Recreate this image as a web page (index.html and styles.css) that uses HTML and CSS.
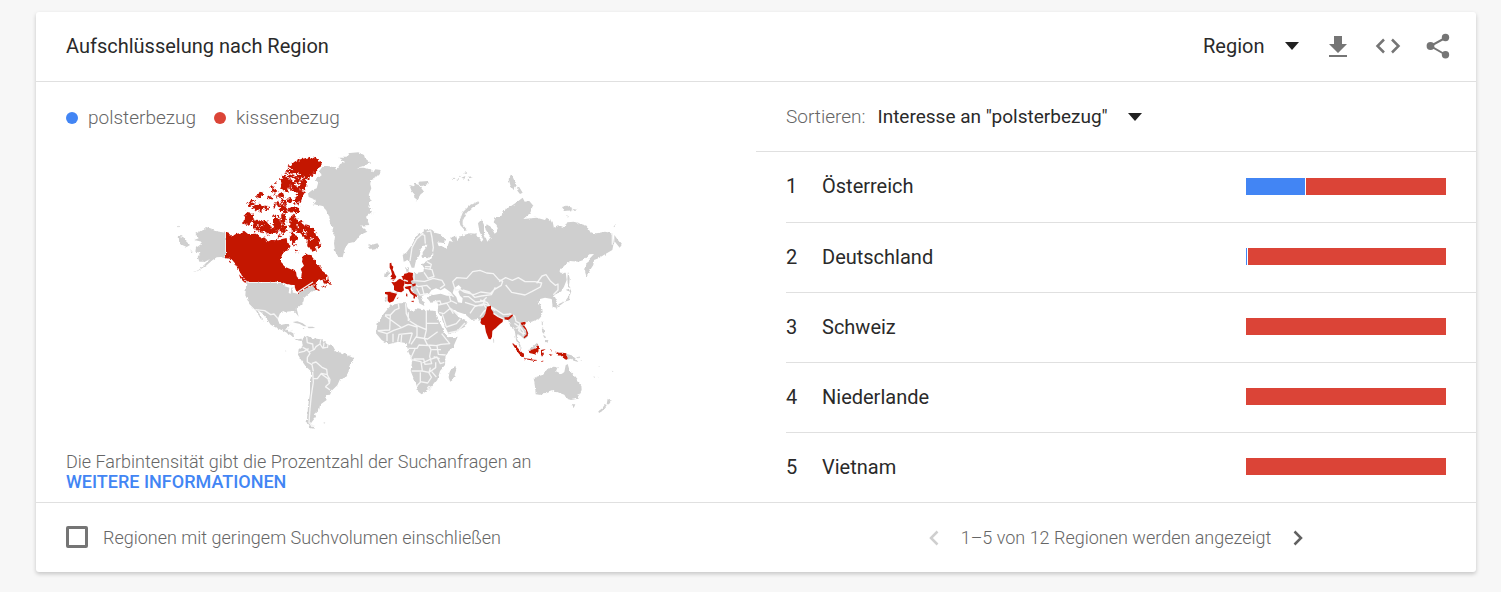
FILE: index.html
```html
<!DOCTYPE html>
<html lang="de">
  <head>
    <meta charset="utf-8">
    <title>Aufschlüsselung nach Region</title>
    <link rel="stylesheet" href="styles.css">
  </head>
  <body>
    <main class="card">
      <header class="card-header">
        <h1>Aufschlüsselung nach Region</h1>
        <div class="actions">
          <div class="dropdown">
            <select aria-label="Auflösung"><option>Region</option></select>
            <svg class="arrow" viewBox="0 0 14 8"><path d="M0 0h14L7 8z"/></svg>
          </div>
          <button class="icon-button" aria-label="Herunterladen">
            <svg viewBox="0 0 30 30"><path d="M11 5h8v8h5l-9 9-9-9h5zM6 24h18v2H6z"/></svg>
          </button>
          <button class="icon-button" aria-label="Einbetten">
            <svg viewBox="0 0 30 30"><path class="line" d="M11 8.500l-6.500 6.500 6.500 6.500M19 8.500l6.500 6.500-6.500 6.500"/></svg>
          </button>
          <button class="icon-button" aria-label="Teilen">
            <svg viewBox="0 0 30 30"><path class="line thin" d="M23 6.500L7.500 15 23 24"/><circle cx="22.500" cy="6.500" r="3.700"/><circle cx="7.500" cy="15" r="3.900"/><circle cx="22.500" cy="23.700" r="3.700"/></svg>
          </button>
        </div>
      </header>

      <div class="content">
        <section class="map-side">
          <div class="legend">
            <span class="term"><i class="dot blue"></i>polsterbezug</span>
            <span class="term"><i class="dot red"></i>kissenbezug</span>
          </div>

          <svg class="map" viewBox="-24 0 1404 870" role="img" aria-label="Weltkarte">
            <defs>
              <filter id="coast" x="-10%" y="-10%" width="120%" height="120%">
                <feTurbulence type="fractalNoise" baseFrequency="0.12" numOctaves="3" seed="4" result="noise"/>
                <feDisplacementMap in="SourceGraphic" in2="noise" scale="20" xChannelSelector="R" yChannelSelector="G"/>
              </filter>
              <filter id="shore" x="-5%" y="-5%" width="110%" height="110%">
                <feTurbulence type="fractalNoise" baseFrequency="0.1" numOctaves="2" seed="9" result="noise"/>
                <feDisplacementMap in="SourceGraphic" in2="noise" scale="9" xChannelSelector="R" yChannelSelector="G"/>
              </filter>
            </defs>

            <!-- Alaska -->
            <g class="land" filter="url(#shore)">
              <path d="M166 263L140 259 125 251 108 246 100 253 85 262 76 266 86 280 73 285 95 290 93 298 78 308 76 320 92 323 83 335 88 350 105 350 120 342 102 360 80 380 108 362 128 345 140 337 152 336 166 340z"/>
              <path d="M26 272l14 4 5 10 15 14-10 6-8-4-14-6zM24 242l8 3-6 2zM62 316l6 3-5 2zM80 378l-12 3 8-1z"/>
            </g>

            <!-- Canada, mainland -->
            <g class="hit" filter="url(#shore)">
              <path d="M168 263L178 267 186 275 196 268 210 264 222 257 234 267 258 266 270 277 286 278 290 292 303 285 325 286 336 282 350 279 352 295 362 303 355 316 340 320 333 338 333 354 346 366 366 374 378 380 380 394 388 403 394 397 396 382 392 372 402 362 396 350 399 334 409 326 422 331 434 345 440 358 450 362 454 376 470 387 468 402 445 407 426 422 405 432 385 445 375 432 374 420 355 419 335 411 235 411 222 402 209 380 195 355 184 342 168 340z"/>
              <path d="M430 420l12-4-4 10 6 10-12-3zM458 405l14-3 2-10 4 18 8 10-13-3-12-2zM452 424l10-2 10-3-8 8zM442 433l10 3-8 1zM207 388l8 8 18 18-12-4-10-10zM172 343l14 10-6 0z"/>
            </g>
            <!-- Canada, arctic islands -->
            <g class="hit islands" filter="url(#coast)">
              <path d="M347 80L358 62 375 50 398 42 420 37 445 42 455 57 442 75 425 92 412 103 408 122 400 150 390 174 377 165 383 145 368 135 362 118 352 140 336 136 331 118 337 92 350 96 368 108 385 95 360 100 350 90z"/>
              <path d="M226 204l24 3-4 18-8 15-18-4zM250 222l16 8 22-4 12 14 8 28-14 0-14-8-20-4-14-13z"/>
              <path d="M360 212l14-4 8 18 18 10 18 6 14 12 10 22 8 16-2 16-12-4 4 16-14-4-14-12 2-16-14-14-12-14-14 0-14-10-2-16z"/>
              <path d="M310 212l14 2 8 14 2 22-12 12-14-8 4-18zM334 208l12 0 2 26-14 2zM338 240l10 0 2 22-12 8-6-14zM300 245l10 4 8 14-16-2zM322 267l18 8-6 4-12-4zM363 260l16 12 4 12-14 10-10-12z"/>
              <path d="M357 188l30 0 0 13-28 1zM330 183l12-2 14 16-10 6-16-6zM313 173l14-2 4 12-12 4zM335 164l12 2 4 14-12-2zM372 162l16 2-6 14-12-3zM353 158l12 4-2 12-10-4z"/>
              <path d="M233 174l12-10 14 2-12 8-6 12zM252 176l18 2 16 6-12 16-16-4-10-8zM264 148l12-8 4 10-18 10zM285 182l10 3-2 10-8-3zM293 155l12-2 0 10-12-2zM304 135l10-6 8 10-8 8zM300 126l10-3-4 8zM328 144l12 2 2 12-14-2zM316 152l8 0-2 8zM315 112l5 2-4 4zM358 124l12 8-8 6z"/>
              <path d="M375 312l10 6-6 5zM368 290l10 14-12-6z"/>
              <path class="fjord" d="M348 84l24 6 18-4M352 64l16 10M404 92l-22 34M392 134l14 2M372 110l10 12M262 244l18-2M400 256l12 18M384 240l2 12M416 284l14-4"/>
            </g>

            <!-- Greenland and Iceland -->
            <g class="land" transform="translate(360 0)" filter="url(#shore)">
              <path d="M54 145L66 136 80 130 85 112 74 104 95 88 86 80 97 66 112 63 132 66 140 74 150 58 164 50 148 38 170 38 180 24 205 22 222 30 225 40 240 52 225 62 200 68 222 68 240 74 250 82 256 73 272 75 268 90 250 100 240 115 244 130 236 150 242 165 235 185 246 200 228 215 238 240 210 242 232 260 210 270 195 290 175 295 165 310 158 337 145 336 135 318 132 295 135 275 127 262 130 245 120 237 118 215 108 195 95 182 68 178 78 165 56 156z"/>
              <path d="M234 296l10 4 18-5 6 8-12 10-14 2-8-8 6-3zM245 205l8-2-6 8zM236 188l12 2-10 4z"/>
            </g>

            <!-- Eurasia -->
            <g transform="translate(600 60)">
              <path class="land" filter="url(#shore)" d="M186 194L195 203 212 208 226 222 222 235 202 232 206 243 222 245 230 252 238 228 250 230 240 218 258 212 262 225 272 213 300 205 318 206 335 228 340 225 328 198 324 175 335 163 342 180 342 205 352 230 362 217 346 192 350 178 362 185 374 206 385 198 380 180 371 172 377 156 395 152 398 138 420 125 440 112 458 98 464 110 478 108 490 122 480 145 460 162 500 158 525 165 530 158 548 170 552 190 565 183 582 190 592 172 612 170 650 182 662 203 680 205 705 200 727 205 731 235 727 255 705 268 687 279 672 285 670 300 656 322 650 337 645 320 648 300 660 280 672 267 658 268 640 285 625 290 600 288 585 300 568 318 575 328 587 322 590 345 582 365 573 380 562 382 552 393 561 412 560 428 548 425 545 402 525 398 510 402 506 410 515 428 518 440 510 460 485 470 468 472 460 485 473 500 473 515 463 523 452 512 442 508 440 520 450 538 455 550 448 545 438 525 435 500 430 490 420 480 413 463 405 466 393 465 378 490 365 500 358 522 350 500 345 475 333 472 325 462 305 465 285 448 262 440 248 430 252 440 265 455 280 465 293 470 285 485 255 500 236 508 225 485 213 455 203 442 205 420 202 408 180 410 172 400 182 390 172 384 162 390 155 394 160 408 163 423 148 415 142 395 128 378 118 350 132 325 160 320 163 310 155 298 170 288 182 284 190 270 188 250 178 230z"/>
              <path class="land" filter="url(#shore)" d="M186 194L172 192 160 200 147 205 135 222 124 242 110 262 98 270 101 290 116 285 125 308 133 308 137 290 150 268 152 252 166 236 172 242 158 262 158 278 175 280 186 272 192 250zM108 312l8-8 0 18-6 2zM44 325l10-6 4 8-8 10-8-2zM46 392l5 0-2 18-5 0z"/>
              <path class="sea" d="M176 388L184 376 198 370 212 376 224 369 242 382 250 393 230 392 212 386 190 390zM252 370L266 360 274 368 265 380 270 392 278 400 276 414 264 412 259 396 248 384z"/>
              <!-- arctic islands -->
              <g class="land" filter="url(#shore)">
                <path d="M118 60l14 4 4-8 10 4 10 12 6 8-10 8-14 22-3-20-10-12zM146 50l28-2 2 8-22 8-8-6z"/>
                <path d="M325 109l3 6-20 12-18 16-12 24 0 12 14 16-6 2-15-16-3-12 11-28 18-18z"/>
                <path d="M416 42l8-16 6 14 10 24-8 12-10-12zM442 65l6 2 10 16-8 4-8-10zM576 126l14-4 16 6-2 8-20 2zM606 131l18 4-10 3zM588 150l8 4-2 4zM728 183l10-2-6 6zM733 210l22 30-6 8-16-20z"/>
                <path d="M244 40l10-2-3 4zM258 45l12-3-5 6zM274 38l12-5-2 8zM282 24l10-3-4 6zM292 36l16-2-8 6zM266 34l8-3-3 5zM293 44l7 2-6 3z"/>
                <path d="M594 320l5 20-2 22 5 8-8-4-2-24zM600 372l4 6-6 18 0 10-14 4-12 10-14 6 10-10 18-8 10-14zM588 375l14-4-6 8zM557 426l6 2-2 6z"/>
              </g>
              <!-- borders -->
              <path class="border" d="M120 288l6-40 14-26 20-18M150 205l14 6 2 25M170 200l12-2 4 20 4 30-2 12M248 350l12-12 30 2 18-20 22-4 20 8 20 2 16 18 12 5-4 12-20 12-12 12-30-4-20 8-30-8-12-8-14 2zM387 350l20-12 20 8 18-8 20 12 30 0 20 4-4 12-26 14-20 10-40-8-18-22M500 355l16-22 12-4 14 20 14 12 8-4 0 18-14 14M132 325l0 22 30 2M162 322l12 18 18-6-6-20-22-4M162 350l28-10 26 6 8 14-14 10M130 355l14 10 26-4 12 12M140 370l10 20 22-4M156 364l6 24M235 383l16 12M242 408l-4-16M278 375l20 6 16 16 20-4 30-4 12-22M280 395l16 0 20 16 22-2 12-12M285 412l30 10 22 0 8-18M205 420l26-6 14-6 16 8M230 414l20 32M300 445l14-20 26-8 10 14-20 24M340 415l30 14 30 20 20-2M330 405l22 8 10 16 14 8M334 450l10-14M418 445l16 8 4 16 12 6 16-4M450 475l-4 22 12 8 8 0M170 290l14 8-4 14M165 305l18 0M110 322l10 0M190 410l20-2 4 12M727 205l0 34"/>
              <!-- western Europe -->
              <g class="hit">
                <path d="M59 295l5-2 1 8 5 4-2 9 4 6 2 7 5 8-3 6-10 2-5 0 6-6-6-2 5-7-3-12-4-8zM66 345l10-2-6 4z"/>
                <path d="M94 334l7-2 2-6 8-1 5-3 13 2-1 12 2 8-8 4 4 9-12 1-10-2 0-8-6-5 0-4z"/>
                <path d="M64 351l10 1 6-3 4-5 6-3 14 8-1 9-3 8 2 10-8 6-12-2-10-5 0-12zM104 363l6 2-1 6z"/>
                <path d="M45 381l17-1 20 3-2 6-4 8-6 12-12 4-5-6 0-18-8-2zM80 400l6-3-3 4z"/>
                <path d="M104 367l6-5 10 0 4 2-3 8 5 9 14 9 1 7-5-3-2 7-4-1 1-8-10-7-6-12-8-2zM122 408l10-1-2 5zM109 385l3 2 0 8-4-2zM126 358l10-3 2 6-10 4z"/>
              </g>
              <path class="sea-line" d="M102 345l12 4M102 364l20-4M62 380l22 5"/>
            </g>

            <!-- Africa -->
            <g transform="translate(585 240)">
              <path class="land" filter="url(#shore)" d="M78 240L105 235 125 235 128 250 145 260 158 250 185 256 212 258 216 275 228 300 238 322 250 337 278 335 265 365 242 388 240 420 225 438 217 465 195 492 170 508 160 500 150 470 137 438 142 405 130 380 125 355 100 350 70 358 50 345 33 325 38 295 55 268zM271 422l3 12-10 30-8 6-5-12 4-20z"/>
              <path class="border" d="M60 270l16 0 14-15 12-5-2-14M76 270l-2 45-36 2M60 272l50 36 20-10 26 8 0 26-18 26M122 236l2 30 10 20M130 262l0 26M134 288l22 14 28 12M184 255l0 40 36 0M184 295l0 20-6 26 10 20M40 318l26 8 20-10 24-8M66 328l0 20M84 352l0-26M98 350l4-22 40-4M110 330l-2 24M142 324l-10 32M152 336l36 6 30-22M188 360l26 2 14-4 26-2-24-30M216 362l4 26 22 2M130 370l26 0 6-10 30 2 6 12-4 20 6 22-20 2-4-16-30 0M150 372l-14 30M138 404l30 6 4 28-32 0M172 414l22-10 22-8 10 20 12-4M172 438l20 4 20-14 0-16M166 442l0 30-10 10M166 470l22 4 12-18M200 440l14 16M196 428l-4 16 8 14M192 484l6 4-4 6-6-6zM200 374l28 0M206 395l18 6M222 262l14 4 20-16 24 20M232 268l12 38 30-10 12-14M250 324l28-6 22-24"/>
            </g>

            <!-- North and South America -->
            <g transform="translate(180 375)">
              <path class="land" filter="url(#shore)" d="M49 38L155 38 170 46 190 50 188 68 205 69 225 58 242 48 254 54 255 60 238 70 222 84 220 98 200 116 206 140 197 128 185 124 165 125 150 130 143 148 150 166 162 163 178 162 168 176 178 184 190 190 193 206 205 208 216 206 214 213 198 210 182 195 160 182 140 174 122 164 108 143 95 128 82 120 90 134 100 152 92 146 78 122 58 102 46 76z"/>
              <path class="land" filter="url(#shore)" d="M216 213L220 203 232 198 246 204 270 208 284 214 290 222 310 230 318 245 335 248 350 254 370 264 369 276 358 288 355 310 348 322 330 328 322 346 305 362 300 374 285 376 290 390 270 404 268 418 255 430 258 440 246 455 240 464 256 477 240 474 230 458 234 410 240 370 240 330 246 306 228 290 212 268 204 254 206 238 218 228z"/>
              <path class="land" d="M188 156l14-2 16 6 12 9-8 0-14-8-12-2zM232 170l16 0 8 4-20 1zM218 174l6 1-4 2zM280 458l6-1-3 4zM166 241l3 2-2 2z"/>
              <path class="sea" d="M162 48l14-5 16 6-8 4-2 18-6-2 2-16zM187 53l10 3-2 12-6-2zM193 69l16-5-6 7z"/>
              <path class="border" d="M76 119l28 3 18 12 10-2 12 14M203 66l46-30M166 180l12-6M178 186l10-6M218 232l12 6 10 12-8 12M230 202l2 16 16 4 2 18-14 6M252 240l6-10 12-8 2-12M270 222l8 12 12-2M282 218l-2 16M294 222l-2 12M206 248l16-4 14-8M232 262l0 14 14 8 4 20M246 280l12-4 18 16 14 6 2 16-18-4-12 16-14 0M274 312l20 14 4 14-12 10M292 315l8 14-2 12M248 306l2 30-6 40-4 40-3 42 8 6M286 350l14 10M240 463l14 6"/>
            </g>

            <!-- South Asia and Oceania -->
            <g transform="translate(885 375)">
              <path class="hit" d="M66 110l12-3 0 10 6 8 2 8 12 5 16 10-1 8-8 6-12 11-11 9-1 18-4 8-6-1-8-20-4-22-8-1-5-6 2-6 0-6 8-5 5-10z"/>
              <path class="hit" d="M118 142l12 0 12-9 2 4-10 10-5 3-10-2zM166 158l13-3 4 4-6 7 7 10 5 12-1 9-10 8-2-3 9-9-2-12-11-13z"/>
              <path class="hit" filter="url(#shore)" d="M141 220l10 5 10 12 11 11 6 15-8-2-12-15-10-15zM178 265l14 1 14 3 16 1-14 3-18-4-14-2zM191 240l12-2 9-4 4-8 6 2-2 14-5 12-12-3-10-2zM228 240l14-3-9 7 4 8-6 8-4-8zM272 245l10 3 10 0 12 2 2 20-6-2-10-9-9-3-8-6zM256 237l4 4-3 4zM252 252l12 2-10 1zM228 272l8 1-6 3z"/>
              <path class="land" filter="url(#shore)" d="M206 325L215 320 230 316 245 300 262 290 278 291 273 304 290 312 298 306 302 286 308 282 314 302 322 312 335 328 349 345 350 360 342 375 335 387 318 390 305 386 298 374 286 370 262 360 240 368 228 375 212 373 210 350zM318 403l13 0-5 11zM428 386l6 5 6 0-8 12-7 0zM421 403l4 3-14 18-9 5-2-5 10-8z"/>
              <path class="land" filter="url(#shore)" d="M305 252l15 4 10 8 10 12-14-4-8-6-13 3zM190 238l12-6 14-14 4 8-8 2-6 10zM230 175l6 2 2 14-5-2zM234 195l8 4-4 6zM240 210l10 0-2 8-8-2zM333 263l12-4-6 6zM84 208l5 6-3 6zM400 285l4 6-2 0zM230 155l4 6-3 6zM170 163l6 2-3 3z"/>
              <path class="border" d="M86 130l14 10 18 8M152 175l14-4 10 14-2 12M148 160l14 10 4 16"/>
              <path class="land" d="M440 302l6 2-4 1zM386 318l4 4-3 1zM346 270l6 2-3 1zM398 320l4 2-3 0z"/>
            </g>
          </svg>

          <p class="note">Die Farbintensität gibt die Prozentzahl der Suchanfragen an<br>
            <a href="#">WEITERE INFORMATIONEN</a></p>
        </section>

        <section class="list-side">
          <div class="sort-bar">
            <label for="sort">Sortieren:</label>
            <div class="dropdown">
              <select id="sort"><option>Interesse an "polsterbezug"</option></select>
              <svg class="arrow" viewBox="0 0 14 8"><path d="M0 0h14L7 8z"/></svg>
            </div>
          </div>
          <ol class="regions">
            <li><span class="rank">1</span><span class="name">Österreich</span>
              <div class="bar"><div class="part blue" style="width: 29.5%"></div><div class="part red rest"></div></div></li>
            <li><span class="rank">2</span><span class="name">Deutschland</span>
              <div class="bar"><div class="part blue" style="width: 0.5%"></div><div class="part red rest"></div></div></li>
            <li><span class="rank">3</span><span class="name">Schweiz</span>
              <div class="bar"><div class="part red rest"></div></div></li>
            <li><span class="rank">4</span><span class="name">Niederlande</span>
              <div class="bar"><div class="part red rest"></div></div></li>
            <li><span class="rank">5</span><span class="name">Vietnam</span>
              <div class="bar"><div class="part red rest"></div></div></li>
          </ol>
        </section>
      </div>

      <footer class="card-footer">
        <label class="low-volume"><input type="checkbox">Regionen mit geringem Suchvolumen einschließen</label>
        <div class="pager">
          <button class="page-button" aria-label="Zurück" disabled><svg viewBox="0 0 10 16"><path d="M8.500 1.500L2 8l6.500 6.500"/></svg></button>
          <span>1–5 von 12 Regionen werden angezeigt</span>
          <button class="page-button" aria-label="Weiter"><svg viewBox="0 0 10 16"><path d="M1.500 1.500L8 8l-6.500 6.500"/></svg></button>
        </div>
      </footer>
    </main>
  </body>
</html>
```

FILE: styles.css
```css
* {
  box-sizing: border-box;
}
body {
  margin: 0;
  padding: 12px 25px 20px 36px;
  background: #f7f7f7;
  font-family: Roboto, sans-serif;
  font-size: 20px;
  line-height: 24px;
  color: #2a2a2a;
}
.card {
  background: #fff;
  border-radius: 3px;
  box-shadow: 0 2px 4px rgba(0, 0, 0, 0.2);
}
.card-header {
  display: flex;
  justify-content: space-between;
  align-items: center;
  height: 70px;
  padding: 0 23px 2px 30px;
  border-bottom: 1px solid #e0e0e0;
}
h1 {
  margin: 0;
  font-size: 20px;
  font-weight: 400;
}
.actions {
  display: flex;
  align-items: center;
  gap: 20px;
}
.dropdown {
  display: flex;
  align-items: center;
  gap: 20px;
}
.actions .dropdown {
  margin-right: 4px;
}
select {
  appearance: none;
  margin: 0;
  padding: 0;
  border: none;
  background: none;
  font: inherit;
  color: inherit;
  cursor: pointer;
}
.arrow {
  width: 14px;
  height: 8px;
  fill: #212121;
}
button {
  padding: 0;
  border: none;
  background: none;
  cursor: pointer;
}
.icon-button svg {
  display: block;
  width: 30px;
  height: 30px;
  fill: #757575;
}
.icon-button .line {
  fill: none;
  stroke: #757575;
  stroke-width: 2.5;
}
.icon-button .thin {
  stroke-width: 2;
}

.content,
.card-footer {
  display: grid;
  grid-template-columns: 1fr 1fr;
}
.map-side {
  padding: 24px 30px 10px;
}
.legend {
  display: flex;
  gap: 18px;
  color: #666;
  font-size: 19px;
  font-weight: 300;
}
.term {
  display: flex;
  align-items: center;
  gap: 10px;
}
.dot {
  width: 12px;
  height: 12px;
  border-radius: 50%;
}
.blue {
  background: #4285f4;
}
.red {
  background: #db4437;
}
.map {
  display: block;
  width: 100%;
  max-width: 468px;
  margin: 15px auto 17px;
}
.land {
  fill: #cfcfcf;
}
.hit {
  fill: #c41200;
}
.islands {
  stroke: #c41200;
  stroke-width: 1;
}
.fjord {
  fill: none;
  stroke: #fff;
  stroke-width: 4;
}
.sea {
  fill: #fff;
}
.border,
.sea-line {
  fill: none;
  stroke: #f5f5f5;
  stroke-width: 4;
  stroke-linejoin: round;
}
.note {
  margin: 0;
  font-size: 18px;
  font-weight: 300;
  line-height: 20px;
  color: #666;
}
.note a {
  color: #4285f4;
  font-weight: 500;
  text-decoration: none;
}

.sort-bar {
  display: flex;
  align-items: center;
  gap: 12px;
  height: 70px;
  padding: 0 30px;
  border-bottom: 1px solid #e0e0e0;
  font-size: 19px;
}
.sort-bar label {
  color: #666;
  font-weight: 300;
}
.regions {
  margin: 0;
  padding: 0 0 0 30px;
  list-style: none;
}
.regions li {
  display: flex;
  align-items: center;
  height: 70px;
  padding: 0 30px 2px 0;
}
.regions li + li {
  border-top: 1px solid #e0e0e0;
}
.rank {
  width: 36px;
}
.name {
  flex: 1;
}
.bar {
  display: flex;
  gap: 1px;
  width: 200px;
  height: 17px;
}
.rest {
  flex: 1;
}

.card-footer {
  align-items: center;
  height: 70px;
  border-top: 1px solid #e0e0e0;
  color: #666;
  font-size: 18px;
  font-weight: 300;
}
.low-volume {
  display: flex;
  align-items: flex-start;
  gap: 15px;
  padding-left: 30px;
}
.low-volume input {
  appearance: none;
  width: 22px;
  height: 22px;
  margin: 0;
  border: 3px solid #757575;
  border-radius: 2px;
}
.pager {
  display: flex;
  align-items: center;
  justify-content: center;
  gap: 22px;
}
.page-button svg {
  display: block;
  width: 10px;
  height: 16px;
  fill: none;
  stroke: #616161;
  stroke-width: 2.5;
}
.page-button:disabled svg {
  stroke: #cfcfcf;
}
```
